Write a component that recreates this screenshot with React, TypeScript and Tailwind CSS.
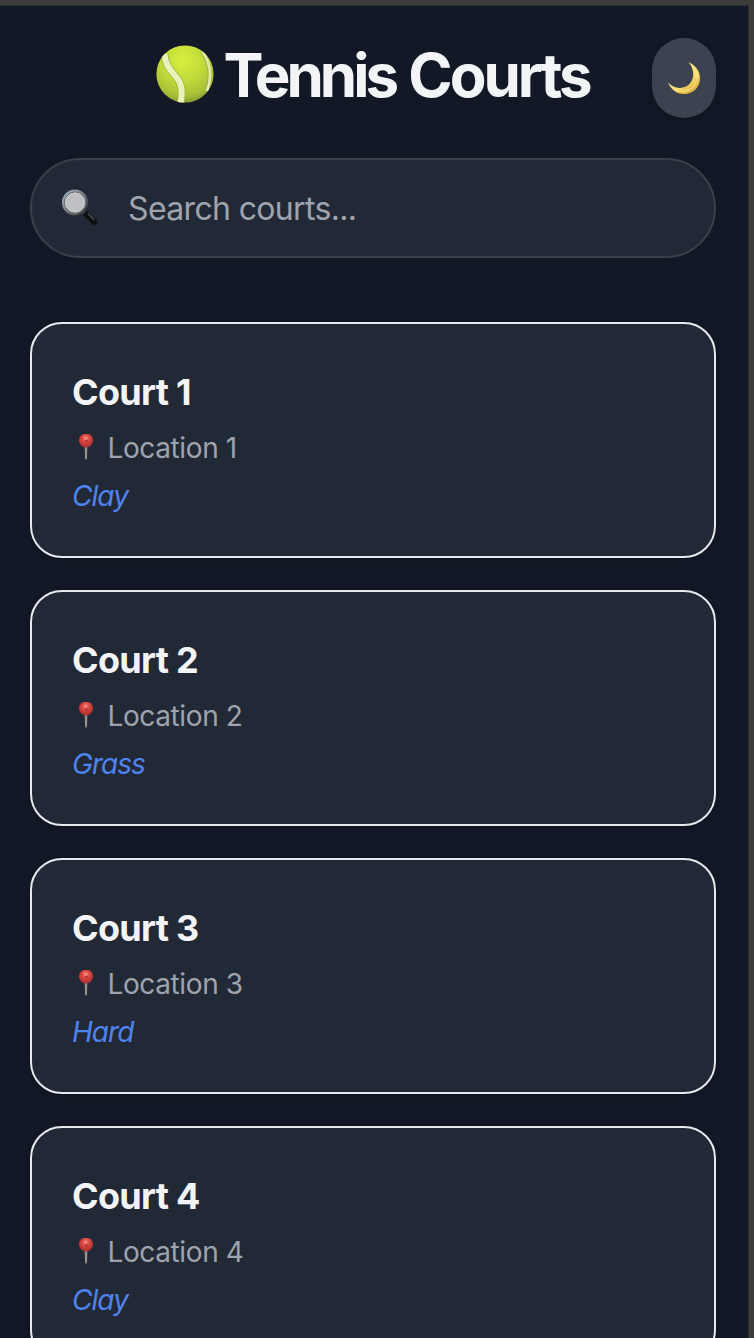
import React from "react";

const courts = [
  { id: 1, surface: "Clay" },
  { id: 2, surface: "Grass" },
  { id: 3, surface: "Hard" },
  { id: 4, surface: "Clay" },
];

function TennisBall() {
  return (
    <svg viewBox="0 0 58 58" className="h-[58px] w-[58px] shrink-0" aria-hidden="true">
      <defs>
        <radialGradient id="ball" cx="0.46" cy="0.26" r="0.76">
          <stop offset="0" stopColor="#d8f03e" />
          <stop offset="0.5" stopColor="#c0d93a" />
          <stop offset="0.82" stopColor="#a8c036" />
          <stop offset="1" stopColor="#849b32" />
        </radialGradient>
        <clipPath id="ballClip">
          <circle cx="29" cy="29" r="28.6" />
        </clipPath>
      </defs>
      <circle cx="29" cy="29" r="28.6" fill="url(#ball)" />
      <g clipPath="url(#ballClip)" fill="none">
        <path
          d="M8.500 9C9.500 23 17 27 22 34.500C26.500 41 26.500 50 24 60"
          stroke="#a3b640"
          strokeWidth="7.800"
        />
        <path
          d="M8.500 9C9.500 23 17 27 22 34.500C26.500 41 26.500 50 24 60"
          stroke="#eaf2bc"
          strokeWidth="6"
        />
        <path d="M46 6.500C54 18 55.500 32 50.500 45" stroke="#a3b544" strokeWidth="4" />
        <path d="M46.500 6.500C54.500 18 56 32 51 46" stroke="#e2ecaa" strokeWidth="2.600" />
      </g>
    </svg>
  );
}

function Moon() {
  return (
    <svg viewBox="0 0 32 32" className="h-8 w-8" aria-hidden="true">
      <defs>
        <linearGradient id="moon" x1="0.3" y1="0.1" x2="0.85" y2="0.9">
          <stop offset="0" stopColor="#fbe58a" />
          <stop offset="0.6" stopColor="#f8dc70" />
          <stop offset="1" stopColor="#dfac38" />
        </linearGradient>
      </defs>
      <path
        d="M20.600.300C27.500 3.200 32 9.200 32 16.200 32 25.200 25.200 32 16.300 32 8.600 32 2.400 27.500.200 20.300c4.300 5.600 12.600 7.200 18.800 3.800C26.600 19.500 27.500 8.200 20.600.300Z"
        fill="url(#moon)"
      />
      <path
        d="M27 8c5 9 0 20-10 21-5 1-9-1-12-4"
        fill="none"
        stroke="#fff0a0"
        strokeOpacity="0.45"
        strokeWidth="1.5"
      />
    </svg>
  );
}

function Magnifier() {
  return (
    <svg viewBox="0 0 38 38" className="h-[38px] w-[38px] shrink-0" aria-hidden="true">
      <defs>
        <linearGradient id="rim" x1="0" y1="0" x2="1" y2="1">
          <stop offset="0" stopColor="#9eb9ca" />
          <stop offset="0.5" stopColor="#75797d" />
          <stop offset="1" stopColor="#252629" />
        </linearGradient>
      </defs>
      <path d="M22 22l4 4" stroke="#77787a" strokeWidth="3.500" />
      <path d="M25.500 25.500l7.500 7" stroke="#101011" strokeWidth="6.400" strokeLinecap="round" />
      <path d="M27.500 25l5.500 5.500" stroke="#55575a" strokeWidth="1.200" strokeLinecap="round" />
      <circle cx="14" cy="13.500" r="12" fill="#bfc0c5" stroke="url(#rim)" strokeWidth="2.200" />
      <circle cx="14" cy="13.500" r="10.500" fill="none" stroke="#4d5055" strokeWidth="0.900" />
      <circle cx="14" cy="13.500" r="9.600" fill="none" stroke="#d2d3d6" strokeWidth="0.700" />
    </svg>
  );
}

function Pin() {
  return (
    <svg viewBox="0 0 16 28" className="ml-[6px] h-7 w-4 shrink-0" aria-hidden="true">
      <defs>
        <radialGradient id="pin" cx="0.48" cy="0.34" r="0.65">
          <stop offset="0" stopColor="#f29b91" />
          <stop offset="0.35" stopColor="#dd4c46" />
          <stop offset="1" stopColor="#a92b2c" />
        </radialGradient>
      </defs>
      <path d="M6.600 12h2.800L9 25.500H7.200Z" fill="#8b827d" />
      <path d="M7.900 13v11" stroke="#b8aea6" strokeWidth="0.800" />
      <circle cx="8" cy="6.500" r="7" fill="url(#pin)" />
      <path d="M7 6.500q1.500-1.500 3 0l-1 3H7.600Z" fill="#bf3535" />
    </svg>
  );
}

function CourtCard({ id, surface }: { id: number; surface: string }) {
  return (
    <article className="h-[236px] shrink-0 rounded-[32px] border-2 border-[#e7e9ec] bg-[#222936] p-10 shadow-[0_2px_5px_rgba(0,0,0,0.2)]">
      <h2 className="text-[36px] leading-[56px] font-[650] tracking-[-0.7px] text-[#f3f4f6]">
        Court {id}
      </h2>
      <p className="mt-2 flex h-10 items-center text-[28px] leading-10 text-[#9ea3ae]">
        <Pin />
        <span className="ml-[13.5px] font-[430] tracking-[-0.38px]">Location {id}</span>
      </p>
      <p className="mt-2 text-[28px] leading-10 font-[430] tracking-[-0.95px] text-[#4f83ee] italic">
        {surface}
      </p>
    </article>
  );
}

export default function App() {
  return (
    <div className="h-[1338px] w-[754px] overflow-hidden bg-[#3c3c3b] pt-[5px] pr-[5px] font-['Inter','Liberation_Sans',sans-serif]">
      <main className="flex h-[1333px] flex-col overflow-hidden border-t border-r border-[#292d34] bg-[#121826] pr-[32px] pl-[30px]">
        <header className="mt-8 grid h-20 shrink-0 grid-cols-[64px_1fr_64px] items-center">
          <span />
          <h1 className="mb-2 flex items-center justify-center gap-[9px] text-[60px] leading-[70px] font-bold text-[#f3f4f6]">
            <TennisBall />
            <span className="mt-px tracking-[-4px] whitespace-nowrap">
              Tennis <span className="ml-[3px] tracking-[-3px]">Courts</span>
            </span>
          </h1>
          <button
            aria-label="Toggle theme"
            className="flex h-20 w-16 items-center justify-center rounded-[32px] bg-[#3c4250] shadow-[0_2px_6px_rgba(0,0,0,0.2)]"
          >
            <Moon />
          </button>
        </header>
        <label className="mt-10 flex h-[100px] shrink-0 items-center rounded-full border-2 border-[#3a404c] bg-[#222936] pl-[29px]">
          <Magnifier />
          <input
            placeholder="Search courts..."
            className="mt-0.5 ml-[29px] w-[500px] bg-transparent text-[32px] leading-[48px] font-[430] tracking-[-0.65px] text-[#9ea3ae] outline-none placeholder:text-[#9ea3ae]"
          />
        </label>
        <section className="mt-16 flex flex-col gap-8">
          {courts.map((court) => (
            <CourtCard key={court.id} id={court.id} surface={court.surface} />
          ))}
        </section>
      </main>
    </div>
  );
}
